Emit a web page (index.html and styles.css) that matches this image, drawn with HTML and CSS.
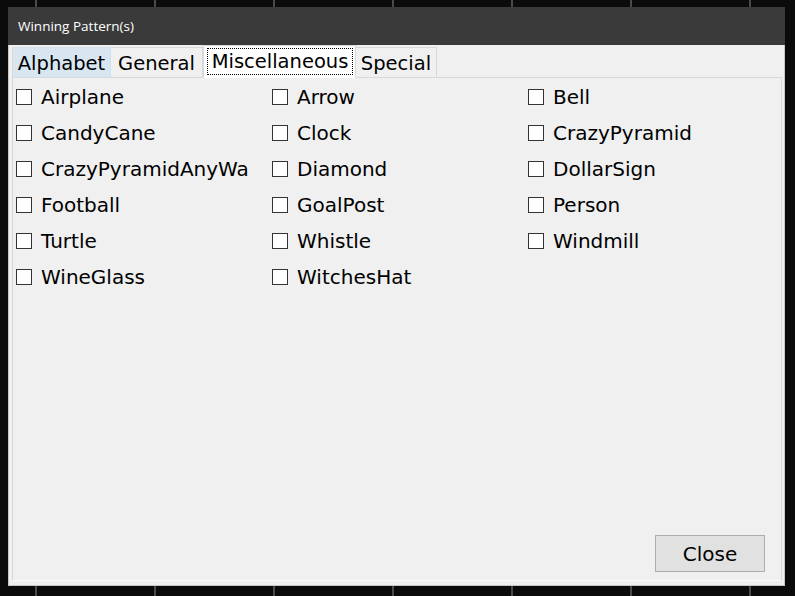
FILE: index.html
```html
<!DOCTYPE html>
<html>
<head>
<meta charset="utf-8">
<link rel="stylesheet" href="styles.css">
</head>
<body>
<div class="desktop">
  <div class="dialog">
    <div class="titlebar">Winning Pattern(s)</div>
    <div class="body">
      <div class="tabs">
        <div class="tab tab-hover tab-alpha">Alphabet</div>
        <div class="tab tab-general">General</div>
        <div class="tab tab-active tab-misc"><span class="focus">Miscellaneous</span></div>
        <div class="tab tab-special">Special</div>
      </div>
      <div class="panel">
        <div class="grid">
          <label class="item"><span class="box"></span><span class="text">Airplane</span></label>
          <label class="item"><span class="box"></span><span class="text">Arrow</span></label>
          <label class="item"><span class="box"></span><span class="text">Bell</span></label>
          <label class="item"><span class="box"></span><span class="text">CandyCane</span></label>
          <label class="item"><span class="box"></span><span class="text">Clock</span></label>
          <label class="item"><span class="box"></span><span class="text">CrazyPyramid</span></label>
          <label class="item"><span class="box"></span><span class="text">CrazyPyramidAnyWa</span></label>
          <label class="item"><span class="box"></span><span class="text">Diamond</span></label>
          <label class="item"><span class="box"></span><span class="text">DollarSign</span></label>
          <label class="item"><span class="box"></span><span class="text">Football</span></label>
          <label class="item"><span class="box"></span><span class="text">GoalPost</span></label>
          <label class="item"><span class="box"></span><span class="text">Person</span></label>
          <label class="item"><span class="box"></span><span class="text">Turtle</span></label>
          <label class="item"><span class="box"></span><span class="text">Whistle</span></label>
          <label class="item"><span class="box"></span><span class="text">Windmill</span></label>
          <label class="item"><span class="box"></span><span class="text">WineGlass</span></label>
          <label class="item"><span class="box"></span><span class="text">WitchesHat</span></label>
        </div>
        <div class="actions">
          <button class="btn">Close</button>
        </div>
      </div>
    </div>
  </div>
</div>
</body>
</html>
```
FILE: styles.css
```css
html, body {
  margin: 0;
  padding: 0;
}
body {
  width: 795px;
  height: 596px;
  overflow: hidden;
  background-color: #0b0b0b;
  background-image:
    linear-gradient(to right, transparent 0, transparent 35px, #4a4a4a 35px, #4a4a4a 37px, transparent 37px),
    linear-gradient(to bottom, transparent 0, transparent 221px, #4a4a4a 221px, #4a4a4a 223px, transparent 223px);
  background-size: 119px 100%, 100% 119px;
  background-position: 0 0, 0 -1px;
  font-family: "DejaVu Sans", Verdana, sans-serif;
}
.desktop {
  padding: 7px 0 0 8px;
}
.dialog {
  width: 777px;
  height: 579px;
  background: #f0f0f0;
  display: flex;
  flex-direction: column;
  box-sizing: border-box;
  border: 1px solid #c8c8c8;
  border-top: none;
}
.titlebar {
  height: 38px;
  margin: 0 -1px;
  background: #3a3a3a;
  color: #ffffff;
  font-family: "Open Sans", "Noto Sans", sans-serif;
  font-size: 13.5px;
  line-height: 38px;
  padding-left: 10px;
}
.body {
  flex: 1;
  display: flex;
  flex-direction: column;
  padding: 0 2px 4px 3px;
}
.tabs {
  display: flex;
  align-items: flex-end;
  height: 32px;
  position: relative;
  z-index: 1;
}
.tab {
  height: 30px;
  box-sizing: border-box;
  border: 1px solid #d9d9d9;
  border-bottom: none;
  border-left: none;
  background: #f0f0f0;
  font-size: 19.5px;
  line-height: 31px;
  padding: 0;
  text-align: center;
  color: #000;
  white-space: nowrap;
}
.tab:first-child {
  border-left: 1px solid #d9d9d9;
}
.tab-alpha { width: 99px; }
.tab-general { width: 92px; }
.tab-misc { width: 153px; }
.tab-special { width: 81px; }
.tab-hover {
  background: #d8e6f2;
  border-color: #cfe0ef;
}
.tab-active {
  height: 33px;
  margin-bottom: -1px;
  background: #ffffff;
  border-left: 1px solid #d9d9d9;
  padding: 2px 2px 0 3px;
  line-height: 27px;
}
.tab-active + .tab {
  border-left: none;
}
.focus {
  display: block;
  border: 1px dotted #000;
  height: 27px;
  box-sizing: border-box;
  line-height: 26px;
}
.panel {
  flex: 1;
  background: #f0f0f0;
  border: 1px solid #d9d9d9;
  border-bottom-color: #ffffff;
  display: flex;
  flex-direction: column;
}
.grid {
  display: grid;
  grid-template-columns: 256px 256px 256px;
  grid-auto-rows: 36px;
  padding: 1px 0 0 3px;
}
.item {
  display: flex;
  align-items: center;
  font-size: 20px;
  color: #000;
}
.box {
  width: 16px;
  height: 16px;
  box-sizing: border-box;
  border: 1px solid #333;
  background: #fff;
  flex: none;
}
.text {
  margin-left: 9px;
  white-space: nowrap;
}
.actions {
  margin-top: auto;
  display: flex;
  justify-content: flex-end;
  padding: 0 16px 8px 0;
}
.btn {
  width: 110px;
  height: 37px;
  background: #e1e1e1;
  border: 1px solid #adadad;
  font-family: "DejaVu Sans", Verdana, sans-serif;
  font-size: 20px;
  color: #000;
  padding: 0;
}
```
